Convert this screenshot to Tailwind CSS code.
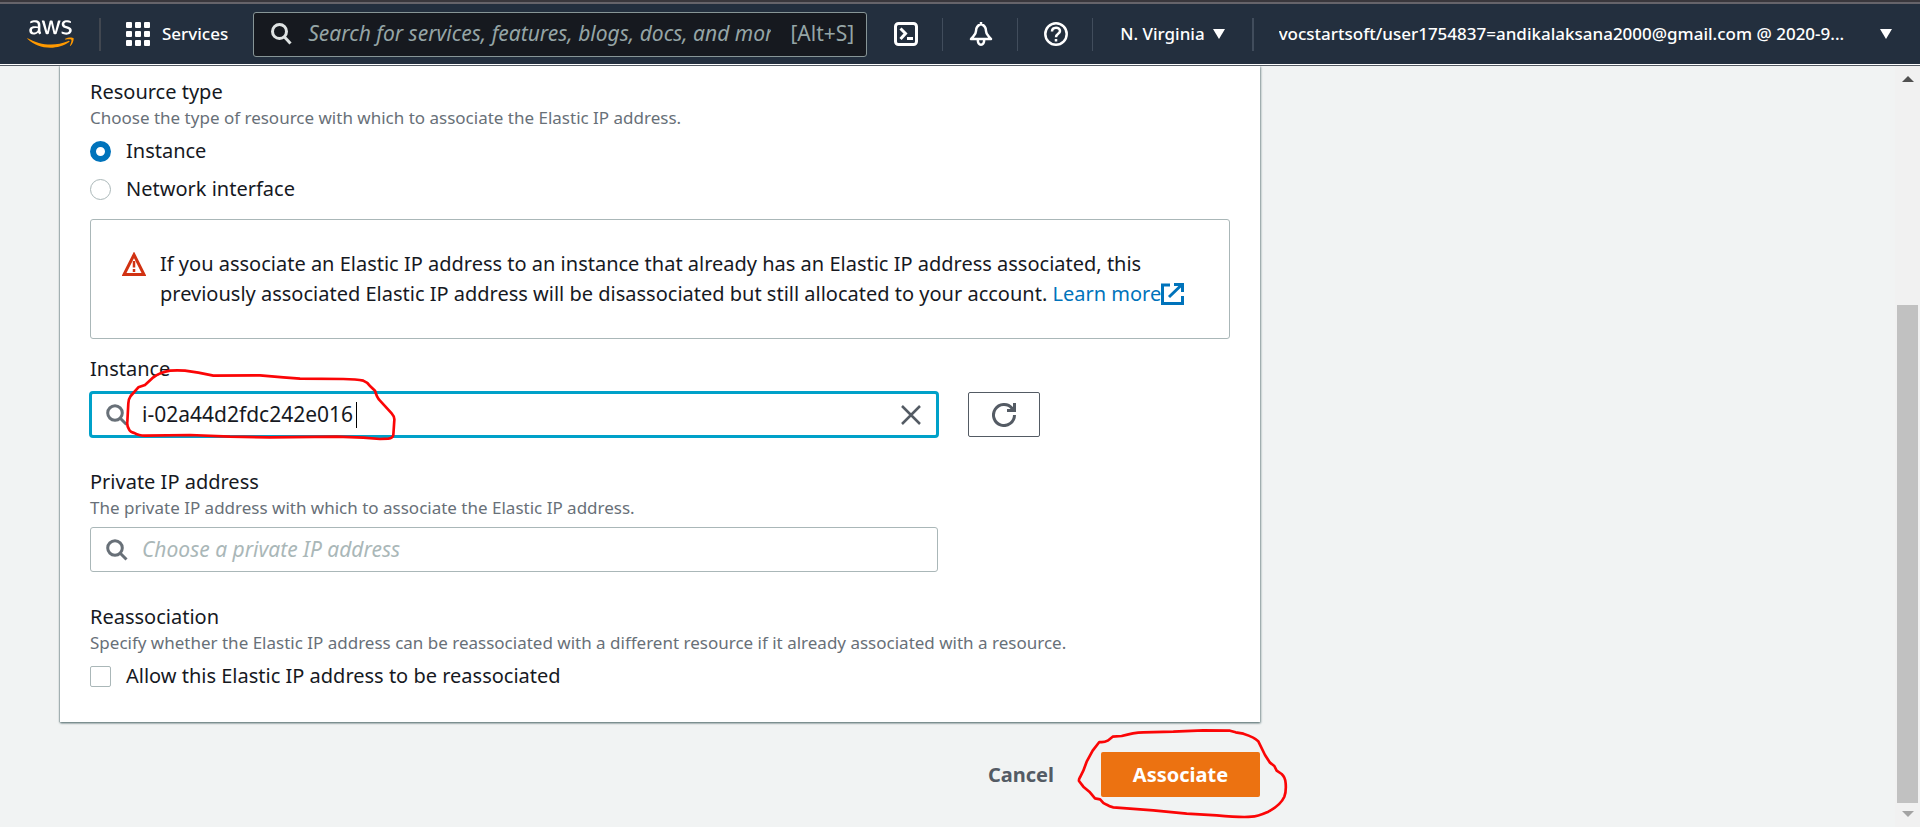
<!DOCTYPE html>
<html lang="en">
<head>
<meta charset="utf-8">
<meta name="viewport" content="width=device-width, initial-scale=1">
<title>Associate Elastic IP address</title>
<script src="https://cdn.jsdelivr.net/npm/@tailwindcss/browser@4"></script>
</head>
<body class="relative flex h-screen flex-col overflow-hidden bg-[#f1f3f3] font-['Noto_Sans','Liberation_Sans',sans-serif] text-[#16191f]">

<header class="flex h-[66px] shrink-0 flex-col">
  <div class="h-0.5 bg-[#39373c]"></div>
  <div class="h-0.5 bg-[#66646a]"></div>
  <nav class="flex h-15 items-center bg-[#232f3e] text-[17px] font-medium text-white" aria-label="Main">
    <a href="#" aria-label="AWS home" class="ml-[27px] shrink-0">
      <svg width="47" height="28" viewBox="0 0 304 182">
        <path fill="#fff" d="M86.400 66.400c0 3.700.4 6.700 1.100 8.900.8 2.200 1.800 4.600 3.200 7.200.5.8.7 1.600.7 2.300 0 1-.6 2-1.900 3l-6.300 4.200c-.9.600-1.800.900-2.600.900-1 0-2-.5-3-1.400-1.400-1.500-2.600-3.100-3.600-4.700-1-1.700-2-3.600-3.100-5.900-7.800 9.200-17.600 13.800-29.400 13.800-8.400 0-15.100-2.400-20-7.200-4.900-4.800-7.400-11.200-7.400-19.200 0-8.500 3-15.400 9.100-20.600 6.100-5.200 14.200-7.800 24.500-7.800 3.400 0 6.900.3 10.600.8 3.700.5 7.500 1.300 11.500 2.200v-7.300c0-7.600-1.600-12.900-4.700-16-3.200-3.100-8.600-4.600-16.300-4.600-3.500 0-7.100.4-10.800 1.300-3.700.9-7.300 2-10.800 3.400-1.600.7-2.800 1.100-3.500 1.300-.7.200-1.200.3-1.600.3-1.400 0-2.100-1-2.100-3.100v-4.900c0-1.600.2-2.800.7-3.500.5-.7 1.400-1.400 2.800-2.100 3.500-1.800 7.700-3.300 12.600-4.500 4.900-1.300 10.100-1.900 15.600-1.900 11.900 0 20.600 2.700 26.200 8.100 5.500 5.400 8.300 13.600 8.300 24.600v32.400zM45.800 81.600c3.300 0 6.700-.6 10.300-1.800 3.600-1.200 6.800-3.400 9.500-6.400 1.600-1.900 2.800-4 3.400-6.400.6-2.400 1-5.300 1-8.700v-4.200c-2.900-.7-6-1.300-9.200-1.700-3.200-.4-6.300-.6-9.400-.6-6.700 0-11.600 1.300-14.900 4-3.300 2.700-4.900 6.500-4.900 11.500 0 4.700 1.200 8.200 3.700 10.600 2.400 2.500 5.900 3.700 10.500 3.700zm80.300 10.800c-1.800 0-3-.3-3.800-1-.8-.6-1.500-2-2.100-3.900L96.700 10.200c-.6-2-.9-3.300-.9-4 0-1.600.8-2.500 2.400-2.500h9.800c1.900 0 3.200.3 3.900 1 .8.600 1.400 2 2 3.900l16.800 66.200 15.600-66.200c.5-2 1.100-3.300 1.900-3.900.8-.6 2.200-1 4-1h8c1.900 0 3.200.3 4 1 .8.600 1.500 2 1.900 3.900l15.800 67 17.300-67c.6-2 1.300-3.300 2-3.900.8-.6 2.100-1 3.900-1h9.300c1.600 0 2.500.8 2.500 2.500 0 .5-.1 1-.2 1.600-.1.600-.3 1.400-.7 2.500l-24.100 77.300c-.6 2-1.300 3.300-2.100 3.900-.8.600-2.100 1-3.800 1h-8.600c-1.900 0-3.200-.3-4-1-.8-.7-1.500-2-1.900-4L156 23l-15.400 64.400c-.5 2-1.100 3.300-1.900 4-.8.700-2.200 1-4 1zm128.500 2.700c-5.200 0-10.400-.6-15.400-1.800-5-1.200-8.900-2.500-11.500-4-1.600-.9-2.700-1.900-3.100-2.800-.4-.9-.6-1.900-.6-2.800v-5.100c0-2.100.8-3.100 2.300-3.100.6 0 1.200.1 1.800.3.6.2 1.500.6 2.500 1 3.400 1.500 7.100 2.700 11 3.500 4 .8 7.900 1.200 11.900 1.200 6.300 0 11.200-1.100 14.600-3.300 3.400-2.200 5.200-5.400 5.200-9.500 0-2.800-.9-5.100-2.700-7-1.800-1.900-5.200-3.600-10.100-5.200L246 52c-7.300-2.300-12.700-5.700-16-10.200-3.300-4.400-5-9.300-5-14.500 0-4.200.9-7.900 2.700-11.100 1.800-3.200 4.200-6 7.200-8.200 3-2.300 6.400-4 10.400-5.200 4-1.200 8.200-1.700 12.600-1.700 2.200 0 4.500.1 6.700.4 2.300.3 4.400.7 6.500 1.100 2 .5 3.900 1 5.700 1.600 1.800.6 3.200 1.200 4.200 1.800 1.400.8 2.400 1.600 3 2.500.6.800.9 1.900.9 3.300v4.700c0 2.100-.8 3.200-2.300 3.200-.8 0-2.100-.4-3.800-1.200-5.700-2.600-12.100-3.900-19.200-3.900-5.700 0-10.200.9-13.300 2.800-3.100 1.900-4.700 4.800-4.700 8.900 0 2.800 1 5.200 3 7.100 2 1.900 5.700 3.800 11 5.500l14.200 4.500c7.200 2.300 12.400 5.500 15.500 9.600 3.100 4.100 4.600 8.800 4.600 14 0 4.300-.9 8.200-2.600 11.600-1.800 3.400-4.200 6.400-7.300 8.800-3.100 2.500-6.800 4.300-11.100 5.600-4.500 1.400-9.200 2.100-14.300 2.100z"/>
        <path fill="#f90" d="M273.500 143.700c-32.900 24.300-80.700 37.200-121.800 37.200-57.600 0-109.500-21.300-148.700-56.700-3.100-2.800-.3-6.600 3.400-4.400 42.400 24.600 94.700 39.500 148.800 39.500 36.500 0 76.600-7.600 113.500-23.200 5.500-2.500 10.200 3.600 4.800 7.600zM287.200 128.100c-4.200-5.400-27.800-2.600-38.500-1.300-3.200.4-3.700-2.400-.8-4.500 18.800-13.200 49.700-9.400 53.300-5 3.600 4.500-1 35.400-18.600 50.200-2.700 2.300-5.300 1.100-4.100-1.900 4-9.900 12.900-32.200 8.700-37.500z"/>
      </svg>
    </a>
    <span class="ml-[25px] h-[33px] w-0.5 shrink-0 bg-[#414750]"></span>
    <button type="button" class="ml-[25px] flex shrink-0 items-center gap-3">
      <svg width="24" height="24" viewBox="0 0 24 24" fill="#fff"><rect width="6" height="6" rx="1"/><rect x="9" width="6" height="6" rx="1"/><rect x="18" width="6" height="6" rx="1"/><rect y="9" width="6" height="6" rx="1"/><rect x="9" y="9" width="6" height="6" rx="1"/><rect x="18" y="9" width="6" height="6" rx="1"/><rect y="18" width="6" height="6" rx="1"/><rect x="9" y="18" width="6" height="6" rx="1"/><rect x="18" y="18" width="6" height="6" rx="1"/></svg>
      <span>Services</span>
    </button>
    <label class="ml-[25px] flex h-[45px] w-[614px] shrink-0 items-center rounded-[3px] border border-[#879596] bg-[#16191f] pr-3 pl-[17px] text-[21px] font-normal text-[#95a5a6]">
      <svg class="shrink-0" width="21" height="22" viewBox="0 0 21 22" fill="none" stroke="#dfe3e3" stroke-width="3"><circle cx="8.500" cy="8.500" r="7"/><path d="M13.500 14l6 6.500"/></svg>
      <input type="text" aria-label="Search" placeholder="Search for services, features, blogs, docs, and more" class="ml-4 w-[463px] bg-transparent outline-none placeholder:text-[#95a5a6] placeholder:italic">
      <span class="ml-auto">[Alt+S]</span>
    </label>
    <button type="button" aria-label="CloudShell" class="ml-[27px] shrink-0">
      <svg width="24" height="24" viewBox="0 0 24 24" fill="none" stroke="#fff" stroke-width="3"><rect x="1.500" y="1.500" width="21" height="21" rx="3"/><path d="M6.500 6.500l5 5-5 5.500M13 16.500h6"/></svg>
    </button>
    <span class="ml-6 h-[33px] w-px shrink-0 bg-[#414d5c]"></span>
    <button type="button" aria-label="Notifications" class="ml-[26px] shrink-0">
      <svg width="24" height="24" viewBox="0 0 24 24" fill="none" stroke="#fff" stroke-width="2.500" stroke-linejoin="round"><path d="M12 2C8 3.500 7 6 7 9c0 4-2.500 5-5 8h20c-2.500-3-5-4-5-8 0-3-1-5.500-5-7zM8.800 17.500c0 7 6.400 7 6.400 0M12 0v3"/></svg>
    </button>
    <span class="ml-6 h-[33px] w-px shrink-0 bg-[#414d5c]"></span>
    <button type="button" aria-label="Help" class="ml-[26px] shrink-0">
      <svg width="24" height="24" viewBox="0 0 24 24" fill="none" stroke="#fff" stroke-width="2.500"><circle cx="12" cy="12" r="10.700"/><path d="M8 9.500c0-5 8-5 8-.5 0 3-4 2.500-4 6.200M12 17v2.600"/></svg>
    </button>
    <span class="ml-6 h-[33px] w-px shrink-0 bg-[#414d5c]"></span>
    <button type="button" class="ml-[27px] flex shrink-0 items-center gap-2">
      <span>N. Virginia</span>
      <svg width="12" height="10" viewBox="0 0 12 10" fill="#fff"><path d="M0 0h12L6 10z"/></svg>
    </button>
    <span class="ml-[27px] h-[33px] w-0.5 shrink-0 bg-[#414d5c]"></span>
    <button type="button" class="mr-7 ml-[25px] flex min-w-0 flex-1 items-center justify-between gap-2">
      <span class="truncate">vocstartsoft/user1754837=andikalaksana2000@gmail.com @ 2020-9...</span>
      <svg class="shrink-0" width="12" height="10" viewBox="0 0 12 10" fill="#fff"><path d="M0 0h12L6 10z"/></svg>
    </button>
  </nav>
  <div class="h-px bg-white"></div>
  <div class="h-px bg-[#545b64]"></div>
</header>

<div class="flex min-h-0 flex-1">
  <main class="min-w-0 flex-1 overflow-hidden pl-15">
    <form class="w-full max-w-[1200px]">
      <div class="bg-white px-[30px] pt-3 pb-[31px] shadow-[0_1px_2px_#5f7576,1px_1px_2px_#aab7b8,-1px_0_1px_#c8cfd0]">
        <fieldset>
          <legend class="text-xl leading-7">Resource type</legend>
          <p class="text-[17px] leading-6 text-[#687078]">Choose the type of resource with which to associate the Elastic IP address.</p>
          <label class="mt-1.5 flex items-center gap-[15px] text-xl leading-[30px]">
            <input type="radio" name="resource" checked class="size-[21px] appearance-none rounded-full border border-[#aab7b8] bg-white checked:border-[6px] checked:border-[#0073bb]">Instance</label>
          <label class="mt-2 flex items-center gap-[15px] text-xl leading-[30px]">
            <input type="radio" name="resource" class="size-[21px] appearance-none rounded-full border border-[#aab7b8] bg-white checked:border-[6px] checked:border-[#0073bb]">Network interface</label>
        </fieldset>

        <div role="alert" class="mt-[15px] flex gap-3.5 rounded-[3px] border border-[#aab7b8] py-[29px] pr-5 pl-[31px]">
          <svg class="mt-[3px] shrink-0" width="24" height="24" viewBox="0 0 24 24" fill="none" stroke="#d13212"><path d="M12 2.800L22 22.500H2z" stroke-width="3"/><path d="M12 9v6.500M12 17v3" stroke-width="2.500"/></svg>
          <p class="text-xl leading-[30px]">If you associate an Elastic IP address to an instance that already has an Elastic IP address associated, this<br>previously associated Elastic IP address will be disassociated but still allocated to your account. <a href="#" class="text-[#0073bb]">Learn more<svg class="inline align-[-4px]" width="23" height="22" viewBox="0 0 23 22" fill="none" stroke="#0073bb" stroke-width="3"><path d="M9 2H1.500v18.500h20V13M8 14L20 2.500M13 1.500h8.500V9"/></svg></a></p>
        </div>

        <label for="instance" class="mt-4 block text-xl leading-7">Instance</label>
        <div class="mt-2 flex items-center gap-[29px]">
          <div class="relative -ml-px flex h-[47px] w-[850px] items-center rounded-[4px] border-[3px] border-[#00a1c9] pr-[15px] pl-3.5">
            <svg class="shrink-0" width="22" height="22" viewBox="0 0 22 22" fill="none" stroke="#687078" stroke-width="3"><circle cx="9" cy="9" r="7.300"/><path d="M14 14l6.500 6.500"/></svg>
            <input id="instance" type="text" value="i-02a44d2fdc242e016" class="ml-3.5 min-w-0 flex-1 bg-transparent text-[21px] outline-none">
            <span class="absolute left-[264px] h-[26px] w-px bg-black"></span>
            <button type="button" aria-label="Clear"><svg width="20" height="20" viewBox="0 0 20 20" fill="none" stroke="#545b64" stroke-width="2.500"><path d="M1 1l18 18M19 1L1 19"/></svg></button>
          </div>
          <button type="button" aria-label="Refresh" class="flex h-[45px] w-[72px] items-center justify-center rounded-[2px] border border-[#545b64]">
            <svg width="24" height="24" viewBox="0 0 24 24" fill="none" stroke="#545b64" stroke-width="3"><path d="M22.500 12A10.500 10.500 0 1 1 20 5.200L21.500 7.500M22.500 0v7.500H15"/></svg>
          </button>
        </div>

        <label for="private-ip" class="mt-[30px] block text-xl leading-7">Private IP address</label>
        <p class="text-[17px] leading-6 text-[#687078]">The private IP address with which to associate the Elastic IP address.</p>
        <div class="mt-[7px] flex h-[45px] w-[848px] items-center rounded-[3px] border border-[#aab7b8] px-[15px]">
          <svg class="shrink-0" width="22" height="22" viewBox="0 0 22 22" fill="none" stroke="#687078" stroke-width="3"><circle cx="9" cy="9" r="7.300"/><path d="M14 14l6.500 6.500"/></svg>
          <input id="private-ip" type="text" placeholder="Choose a private IP address" class="ml-3.5 min-w-0 flex-1 bg-transparent text-[21px] outline-none placeholder:text-[#aab7b8] placeholder:italic">
        </div>

        <h3 class="mt-[31px] text-xl leading-7">Reassociation</h3>
        <p class="text-[17px] leading-6 text-[#687078]">Specify whether the Elastic IP address can be reassociated with a different resource if it already associated with a resource.</p>
        <label class="mt-1.5 flex items-center gap-[15px] text-xl leading-[30px]">
          <input type="checkbox" class="size-[21px] appearance-none rounded-[2px] border border-[#aab7b8] bg-white checked:bg-[#0073bb]">Allow this Elastic IP address to be reassociated</label>
      </div>
      <div class="mt-[30px] flex items-center justify-end gap-[47px] text-xl font-bold">
        <button type="button" class="text-[#545b64]">Cancel</button>
        <button type="submit" class="h-[45px] w-[159px] rounded-[2px] bg-[#ec7211] text-white">Associate</button>
      </div>
    </form>
  </main>
  <div class="flex w-[25px] shrink-0 flex-col items-center bg-[#f1f1f1]" aria-hidden="true">
    <svg class="mt-2.5" width="12" height="6" viewBox="0 0 12 6"><path fill="#505050" d="M6 0l6 6H0z"/></svg>
    <div class="mt-[223px] mb-2 w-[21px] flex-1 bg-[#c1c1c1]"></div>
    <svg class="mb-2.5" width="12" height="6" viewBox="0 0 12 6"><path fill="#a3a3a3" d="M0 0h12L6 6z"/></svg>
  </div>
</div>

<!-- Hand-drawn highlights over the form -->
<svg class="pointer-events-none absolute top-0 left-0" width="1300" height="827" viewBox="0 0 1300 827" fill="none" stroke="#fb0506" stroke-width="8" stroke-linejoin="round" aria-hidden="true">
  <path transform="translate(70 350) scale(.33333)" d="M300 62Q322 60 345 62L385 68L430 77L570 76L640 82L690 86L820 87Q860 87 880 92Q892 96 900 108L915 122Q920 142 930 152L965 190Q974 200 973 210L970 255Q968 265 955 266L930 267L880 263L800 260L600 262L480 260L360 255L225 257Q205 256 195 250Q180 245 178 240Q170 228 172 215L175 160Q176 146 182 138L205 112L225 105L250 82Q272 66 300 62Z"/>
  <path transform="translate(940 700) scale(.33333)" d="M478 126Q492 128 503 122L518 110L545 108Q580 98 610 97L700 95L790 91L870 92L887 97L910 101Q945 112 955 124L975 165L990 188L1003 198L1010 212L1025 222Q1036 232 1037 250Q1039 275 1033 290Q1022 315 985 335Q950 350 935 350Q905 353 830 346L740 341L640 331L520 322Q508 320 500 314Q488 310 480 298L465 295L448 275L430 260L417 243Q416 238 420 232L430 212L440 185L458 152Z"/>
</svg>
</body>
</html>
